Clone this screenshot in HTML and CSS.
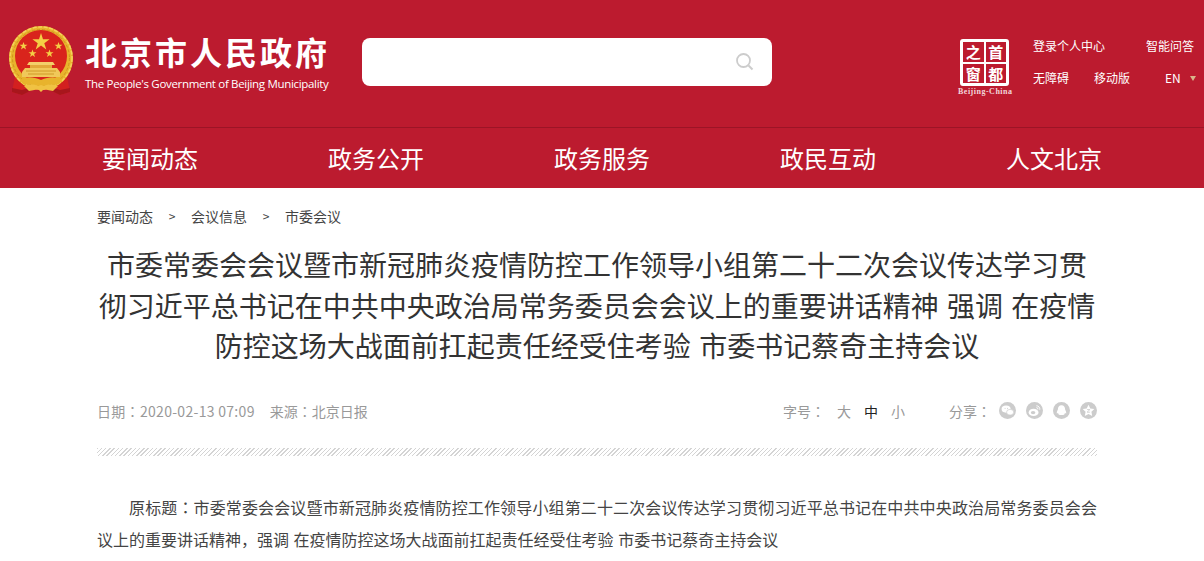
FILE: index.html
```html
<!DOCTYPE html>
<html lang="zh-CN">
<head>
  <meta charset="UTF-8" />
  <title>北京市人民政府</title>
  <link rel="stylesheet" href="styles.css">
</head>
<body>
  <header class="top">
    <div class="brand">
      <svg class="emblem" viewBox="0 0 66 70">
        <!-- ribbon behind the ring -->
        <path d="M7 50l-3 16 10 3 9-5h20l9 5 10-3-3-16z" fill="#d3201f"/>
        <path d="M4 62l10 2 9-3 1 3-10 5-10-3zM62 62l-10 2-9-3-1 3 10 5 10-3z" fill="#a8161c"/>
        <!-- wheat ring -->
        <circle cx="33" cy="32" r="32" fill="#e8b32c"/>
        <circle cx="33" cy="32" r="31" fill="none" stroke="#f4d25c" stroke-width="1.500" stroke-dasharray="4 1.500"/>
        <circle cx="33" cy="32" r="28.500" fill="none" stroke="#cf951f" stroke-width="1" stroke-dasharray="3 2"/>
        <circle cx="33" cy="30" r="26" fill="#d9241c"/>
        <!-- stars -->
        <path d="M33 7l2 6.300h6.600l-5.300 3.900 2 6.300-5.300-3.900-5.300 3.900 2-6.300-5.300-3.900H31z" fill="#f4cf45"/>
        <path d="M15.500 16l1 2.800h3l-2.400 1.800.9 2.900-2.500-1.800-2.500 1.800.9-2.900-2.400-1.800h3zM50.500 16l1 2.800h3l-2.400 1.800.9 2.900-2.500-1.800-2.500 1.800.9-2.900-2.400-1.800h3zM24.500 23.500l1 2.800h3l-2.400 1.800.9 2.900-2.500-1.800-2.500 1.800.9-2.900-2.400-1.800h3zM41.500 23.500l1 2.800h3l-2.400 1.800.9 2.900-2.500-1.800-2.500 1.800.9-2.900-2.400-1.800h3z" fill="#f4cf45"/>
        <!-- gate building -->
        <path d="M21 36h24l2 3H19z" fill="#f3cf6a"/>
        <path d="M22 39h22v3H22z" fill="#e2a93a"/>
        <path d="M17 42h32l3 4v5H14v-5z" fill="#f0c85a"/>
        <path d="M18 45h30M20 48h26" stroke="#c98d1c" stroke-width=".8"/>
        <!-- gold bow at the bottom -->
        <path d="M12 54c7-4 13-3 21 0 8-3 14-4 21 0l-3 4H15z" fill="#e8b32c"/>
        <path d="M16 60c5-2 11-2 14 0l3-1 3 1c3-2 9-2 14 0l-5 5c-4-1-7-1-9-2l-3 3-3-3c-2 1-5 1-9 2z" fill="#f0c243"/>
      </svg>
      <div class="brand-text">
        <div class="brand-cn">北京市人民政府</div>
        <div class="brand-en">The People's Government of Beijing Municipality</div>
      </div>
    </div>
    <div class="search">
      <svg class="search-icon" viewBox="0 0 18 18">
        <circle cx="7.500" cy="7.500" r="6.500" fill="none" stroke="#ccc" stroke-width="1.800"/>
        <path d="M12.500 12.500l4 4" stroke="#ccc" stroke-width="2"/>
      </svg>
    </div>
    <div class="capital">
      <div class="capital-box">
        <span class="capital-cell">之</span>
        <span class="capital-cell">首</span>
        <span class="capital-cell">窗</span>
        <span class="capital-cell">都</span>
      </div>
      <div class="capital-en">Beijing-China</div>
    </div>
    <div class="links">
      <div class="links-row">
        <a class="link link-login">登录个人中心</a>
        <a class="link">智能问答</a>
      </div>
      <div class="links-row">
        <a class="link link-access">无障碍</a>
        <a class="link link-mobile">移动版</a>
        <a class="link link-lang">EN<i class="caret"></i></a>
      </div>
    </div>
  </header>

  <nav class="nav">
    <a class="nav-item">要闻动态</a>
    <a class="nav-item">政务公开</a>
    <a class="nav-item">政务服务</a>
    <a class="nav-item">政民互动</a>
    <a class="nav-item">人文北京</a>
  </nav>

  <main class="article">
    <div class="crumbs">
      <a>要闻动态</a><span class="sep">&gt;</span><a>会议信息</a><span class="sep">&gt;</span><a>市委会议</a>
    </div>
    <h1 class="title">市委常委会会议暨市新冠肺炎疫情防控工作领导小组第二十二次会议传达学习贯彻习近平总书记在中共中央政治局常务委员会会议上的重要讲话精神 强调 在疫情防控这场大战面前扛起责任经受住考验 市委书记蔡奇主持会议</h1>
    <div class="meta">
      <div class="meta-left">
        <span class="date">日期<span class="colon" lang="zh-TW">：</span>2020-02-13 07:09</span>
        <span>来源<span class="colon" lang="zh-TW">：</span>北京日报</span>
      </div>
      <div class="meta-right">
        <span class="size-label">字号<span class="colon" lang="zh-TW">：</span></span>
        <a class="size">大</a>
        <a class="size size-on">中</a>
        <a class="size">小</a>
        <span class="share-label">分享<span class="colon" lang="zh-TW">：</span></span>
        <svg class="share" viewBox="0 0 18 18">
          <circle cx="9" cy="9" r="9" fill="#ccc"/>
          <ellipse cx="7.500" cy="7.500" rx="4.800" ry="3.800" fill="#fff"/>
          <ellipse cx="11.800" cy="10.800" rx="3.800" ry="3" fill="#fff" stroke="#ccc" stroke-width=".7"/>
          <path d="M6 6.800h.9M8.500 6.800h.9" stroke="#ccc" stroke-width="1"/>
        </svg>
        <svg class="share" viewBox="0 0 18 18">
          <circle cx="9" cy="9" r="9" fill="#ccc"/>
          <ellipse cx="8" cy="11" rx="5.200" ry="3.800" fill="#fff"/>
          <ellipse cx="7.500" cy="11.200" rx="2.400" ry="1.800" fill="#ccc"/>
          <path d="M11 4a3.600 3.600 0 0 1 3.600 4.200M11 6a1.500 1.500 0 0 1 1.600 1.800" fill="none" stroke="#fff" stroke-width="1"/>
        </svg>
        <svg class="share" viewBox="0 0 18 18">
          <circle cx="9" cy="9" r="9" fill="#ccc"/>
          <path d="M9 3.500c2.600 0 3.800 2 3.800 4.300 0 .6 1.400 2.500 1.200 4-.1.800-.9.200-1.300-.4-.2 1-.6 1.600-1 2-.8.400-1.800.400-2.700.400s-1.900 0-2.700-.4c-.4-.4-.8-1-1-2-.4.600-1.200 1.200-1.300.4-.2-1.500 1.200-3.400 1.200-4C5.200 5.500 6.400 3.500 9 3.500z" fill="#fff"/>
        </svg>
        <svg class="share" viewBox="0 0 18 18">
          <circle cx="9" cy="9" r="9" fill="#ccc"/>
          <path d="M9 2.800l1.900 4 4.300.6-3.100 3 .8 4.300L9 12.600l-3.900 2.100.8-4.300-3.100-3 4.300-.6z" fill="#fff"/>
          <path d="M7.500 8h3l-3 2.800h3" fill="none" stroke="#ccc" stroke-width=".9"/>
        </svg>
      </div>
    </div>
    <div class="hatch"></div>
    <div class="body">
      <p class="body-first">原标题<span class="colon" lang="zh-TW">：</span>市委常委会会议暨市新冠肺炎疫情防控工作领导小组第二十二次会议传达学习贯彻习近平总书记在中共中央政治局常务委员会会</p>
      <p class="body-rest">议上的重要讲话精神，强调 在疫情防控这场大战面前扛起责任经受住考验 市委书记蔡奇主持会议</p>
    </div>
  </main>
</body>
</html>
```

FILE: styles.css
```css
html, body {
  margin: 0;
  padding: 0;
  height: 561px;
  overflow: hidden;
}
body {
  font-family: "Noto Sans CJK SC", "Liberation Sans", sans-serif;
  background: #fff;
  color: #333;
}
.top {
  display: flex;
  align-items: flex-start;
  height: 127px;
  background: #bc1b2f;
  border-bottom: 1px solid #9c1426;
  color: #fff;
}
.brand {
  display: flex;
  margin: 26px 0 0 8px;
  width: 354px;
}
.emblem {
  width: 66px;
  height: 70px;
}
.brand-text {
  margin-left: 11px;
}
.brand-cn {
  font-size: 32px;
  font-weight: 700;
  letter-spacing: 3px;
  line-height: 50px;
  white-space: nowrap;
}
.brand-en {
  font-family: "Open Sans", "Liberation Sans", sans-serif;
  font-size: 11.500px;
  line-height: 14px;
  letter-spacing: -.32px;
  white-space: nowrap;
  margin-top: 1px;
}
.search {
  display: flex;
  align-items: center;
  justify-content: flex-end;
  width: 410px;
  height: 48px;
  margin-top: 38px;
  background: #fff;
  border-radius: 8px;
}
.search-icon {
  width: 18px;
  height: 18px;
  margin-right: 18px;
}
.capital {
  margin: 39px 0 0 186px;
  width: 52px;
}
.capital-box {
  display: grid;
  grid-template-columns: 1fr 1fr;
  grid-template-rows: 1fr 1fr;
  width: 49px;
  height: 47px;
  margin-left: 2px;
  border: 3px solid #fff;
  box-sizing: border-box;
  background: #fff;
  gap: 2px;
  border-radius: 3px;
}
.capital-cell {
  display: flex;
  align-items: center;
  justify-content: center;
  overflow: hidden;
  background: #bc1b2f;
  font-size: 15px;
  font-weight: 700;
  line-height: 1;
}
.capital-en {
  font-family: "Liberation Serif", serif;
  font-size: 8px;
  font-weight: 700;
  line-height: 10px;
  margin-top: 1px;
  letter-spacing: .5px;
  color: #f2d6da;
  white-space: nowrap;
}
.links {
  margin: 38px 0 0 23px;
  font-size: 12px;
}
.links-row {
  display: flex;
  height: 32px;
  line-height: 16px;
}
.link {
  white-space: nowrap;
}
.link-login {
  width: 113px;
}
.link-access {
  width: 61px;
}
.link-mobile {
  width: 71px;
}
.caret {
  display: inline-block;
  margin-left: 9px;
  vertical-align: 2px;
  border-left: 3px solid transparent;
  border-right: 3px solid transparent;
  border-top: 5px solid #d9b48a;
}
.nav {
  display: flex;
  gap: 130px;
  height: 60px;
  padding-left: 102px;
  background: #bc1b2f;
}
.nav-item {
  font-size: 24px;
  line-height: 60px;
  color: #fff;
  white-space: nowrap;
}
.article {
  width: 1000px;
  margin: 0 auto 0 97px;
}
.crumbs {
  display: flex;
  font-size: 14px;
  line-height: 18px;
  padding-top: 19px;
  color: #444;
}
.sep {
  width: 38px;
  text-align: center;
  font-size: 12px;
}
.title {
  margin: 0;
  padding-top: 19px;
  font-size: 28px;
  font-weight: 400;
  line-height: 40.500px;
  word-spacing: 2px;
  text-align: center;
  color: #333;
}
.colon {
  font-family: "Noto Sans CJK TC", sans-serif;
}
.meta {
  display: flex;
  justify-content: space-between;
  align-items: center;
  margin-top: 33px;
  height: 24px;
  font-size: 14px;
  color: #999;
}
.meta-left .date {
  margin-right: 12px;
  letter-spacing: .3px;
}
.meta-right {
  display: flex;
  align-items: center;
}
.size {
  margin-left: 13px;
}
.size-label {
  margin-right: -1px;
}
.size-on {
  color: #222;
}
.share-label {
  margin-left: 44px;
  margin-right: 8px;
}
.share {
  width: 17px;
  height: 17px;
  margin-left: 10px;
}
.share-label + .share {
  margin-left: 0;
}
.hatch {
  height: 8px;
  margin-top: 25px;
  background: repeating-linear-gradient(135deg, #d4d4d4 0, #d4d4d4 1px, #fff 1px, #fff 3px);
}
.body {
  padding-top: 35px;
  font-size: 16px;
  line-height: 32px;
  word-spacing: 1px;
  color: #444;
}
.body p {
  margin: 0;
}
.body-first {
  text-indent: 32px;
  text-align: justify;
  text-align-last: justify;
}
```
